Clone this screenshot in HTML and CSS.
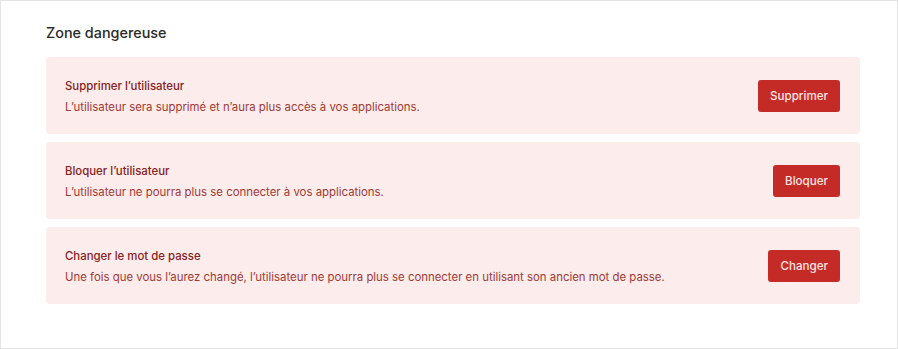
FILE: index.html
```html
<!DOCTYPE html>
<html>
<head>
  <meta charset="utf-8">
  <title>Zone dangereuse</title>
  <link rel="stylesheet" href="styles.css">
</head>
<body>
  <div class="card">
    <h2>Zone dangereuse</h2>

    <div class="danger-list">
      <div class="danger-item">
        <div class="danger-text">
          <div class="danger-title">Supprimer l’utilisateur</div>
          <div class="danger-desc">L’utilisateur sera supprimé et n’aura plus accès à vos applications.</div>
        </div>
        <button class="danger-btn">Supprimer</button>
      </div>
      <div class="danger-item">
        <div class="danger-text">
          <div class="danger-title">Bloquer l’utilisateur</div>
          <div class="danger-desc">L’utilisateur ne pourra plus se connecter à vos applications.</div>
        </div>
        <button class="danger-btn">Bloquer</button>
      </div>
      <div class="danger-item">
        <div class="danger-text">
          <div class="danger-title">Changer le mot de passe</div>
          <div class="danger-desc">Une fois que vous l’aurez changé, l’utilisateur ne pourra plus se connecter en utilisant son ancien mot de passe.</div>
        </div>
        <button class="danger-btn">Changer</button>
      </div>
    </div>
  </div>
</body>
</html>
```

FILE: styles.css
```css
body {
  margin: 0;
  font-family: Inter, "Noto Sans", sans-serif;
  background: #fff;
}

.card {
  box-sizing: border-box;
  width: 898px;
  height: 349px;
  border: 1px solid #e4e4e4;
  padding: 22px 37px 0 45px;
}

h2 {
  margin: 0 0 14px;
  font-size: 14.4px;
  font-weight: 500;
  line-height: 20px;
  color: #2a2a2a;
}

.danger-list {
  display: flex;
  flex-direction: column;
  gap: 8px;
}

.danger-item {
  display: flex;
  align-items: center;
  justify-content: space-between;
  height: 77px;
  box-sizing: border-box;
  padding: 0 20px 0 19px;
  background: #fcecec;
  border-radius: 4px;
}

.danger-text {
  padding-top: 2px;
}

.danger-title {
  font-size: 11.4px;
  font-weight: 500;
  color: #862222;
  line-height: 16px;
  margin-bottom: 5px;
}

.danger-desc {
  font-size: 11.4px;
  color: #a03a35;
  line-height: 16px;
}

.danger-btn {
  height: 32px;
  padding: 0 12px;
  border: none;
  border-radius: 3px;
  background: #c42b26;
  color: #fbe4e4;
  font-family: inherit;
  font-size: 11.6px;
  font-weight: 500;
}
```
